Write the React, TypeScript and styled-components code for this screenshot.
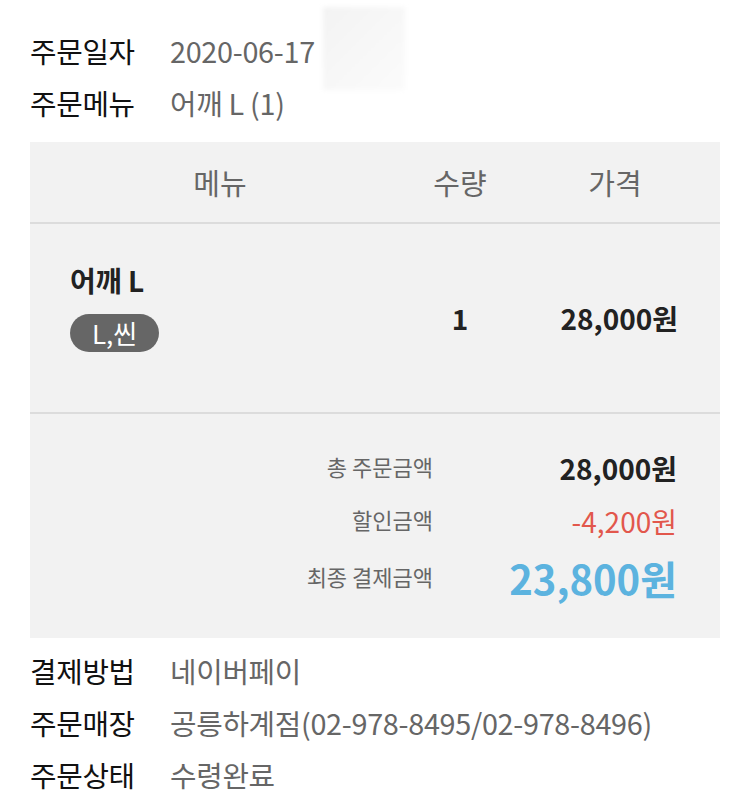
import React from "react";
import styled, { createGlobalStyle } from "styled-components";

const Global = createGlobalStyle`
  html, body {
    margin: 0;
    padding: 0;
    background: #ffffff;
  }
  body {
    font-family: "Noto Sans CJK KR", "Noto Sans", sans-serif;
    color: #111;
  }
`;

const Page = styled.div`
  width: 750px;
  padding: 24px 0 0;
  box-sizing: border-box;
`;

const InfoList = styled.div`
  padding: 0 30px;
`;

const InfoRow = styled.div`
  display: flex;
  align-items: center;
  height: 52px;
  font-size: 28.8px;
  letter-spacing: -0.3px;
`;

const InfoLabel = styled.span`
  width: 140px;
  color: #111;
`;

const InfoValue = styled.span`
  position: relative;
  color: #666;
`;

const BlurMask = styled.span`
  position: absolute;
  left: 153px;
  top: -23px;
  width: 82px;
  height: 83px;
  background: linear-gradient(135deg, #f3f3f3, #f8f8f8 60%, #fbfbfb);
  filter: blur(2px);
`;

const Table = styled.div`
  margin: 14px 30px 6px;
  background: #f2f2f2;
`;

const HeadRow = styled.div`
  display: grid;
  grid-template-columns: 300px 180px 130px;
  padding: 0 40px;
  height: 80px;
  align-items: center;
  border-bottom: 2px solid #dcdcdc;
  font-size: 29px;
  color: #666;
  text-align: center;
`;

const ItemRow = styled.div`
  display: grid;
  grid-template-columns: 300px 180px 130px;
  padding: 0 40px;
  height: 188px;
  align-items: center;
  border-bottom: 2px solid #dcdcdc;
`;

const ItemName = styled.div`
  display: flex;
  flex-direction: column;
  align-items: flex-start;
  gap: 14px;
  margin-top: -24px;
  font-size: 28px;
  line-height: 40px;
  font-weight: 700;
  color: #222;
`;

const OptionPill = styled.span`
  display: inline-flex;
  align-items: center;
  justify-content: center;
  height: 38px;
  padding: 0 22px;
  border-radius: 19px;
  background: #666;
  color: #fff;
  font-size: 26px;
  font-weight: 400;
`;

const Cell = styled.div<{ $align?: string }>`
  text-align: ${(p) => p.$align || "center"};
  font-size: 28px;
  font-weight: 700;
  color: #222;
  margin-right: ${(p) => (p.$align === "right" ? "2px" : "0")};
`;

const Summary = styled.div`
  padding: 27px 43px 29px 0;
`;

const SumRow = styled.div<{ $tall?: boolean }>`
  display: flex;
  align-items: center;
  height: ${(p) => (p.$tall ? "62px" : "53px")};
`;

const SumLabel = styled.span`
  width: 403px;
  text-align: right;
  font-size: 22px;
  color: #666;
  margin-top: -4px;
`;

const SumValue = styled.span<{ $tone?: "normal" | "minus" | "final" }>`
  flex: 1;
  text-align: right;
  font-size: ${(p) => (p.$tone === "final" ? "40px" : "28px")};
  font-weight: ${(p) => (p.$tone === "minus" ? 400 : 700)};
  color: ${(p) =>
    p.$tone === "minus" ? "#e2574c" : p.$tone === "final" ? "#5cb3df" : "#222"};
`;

export default function App() {
  return (
    <Page>
      <Global />
      <InfoList>
        <InfoRow>
          <InfoLabel>주문일자</InfoLabel>
          <InfoValue>
            2020-06-17
            <BlurMask />
          </InfoValue>
        </InfoRow>
        <InfoRow>
          <InfoLabel>주문메뉴</InfoLabel>
          <InfoValue>어깨 L (1)</InfoValue>
        </InfoRow>
      </InfoList>

      <Table>
        <HeadRow>
          <span>메뉴</span>
          <span>수량</span>
          <span>가격</span>
        </HeadRow>
        <ItemRow>
          <ItemName>
            어깨 L
            <OptionPill>L,씬</OptionPill>
          </ItemName>
          <Cell>1</Cell>
          <Cell $align="right">28,000원</Cell>
        </ItemRow>
        <Summary>
          <SumRow>
            <SumLabel>총 주문금액</SumLabel>
            <SumValue>28,000원</SumValue>
          </SumRow>
          <SumRow>
            <SumLabel>할인금액</SumLabel>
            <SumValue $tone="minus">-4,200원</SumValue>
          </SumRow>
          <SumRow $tall>
            <SumLabel>최종 결제금액</SumLabel>
            <SumValue $tone="final">23,800원</SumValue>
          </SumRow>
        </Summary>
      </Table>

      <InfoList>
        <InfoRow>
          <InfoLabel>결제방법</InfoLabel>
          <InfoValue>네이버페이</InfoValue>
        </InfoRow>
        <InfoRow>
          <InfoLabel>주문매장</InfoLabel>
          <InfoValue>공릉하계점(02-978-8495/02-978-8496)</InfoValue>
        </InfoRow>
        <InfoRow>
          <InfoLabel>주문상태</InfoLabel>
          <InfoValue>수령완료</InfoValue>
        </InfoRow>
      </InfoList>
    </Page>
  );
}
